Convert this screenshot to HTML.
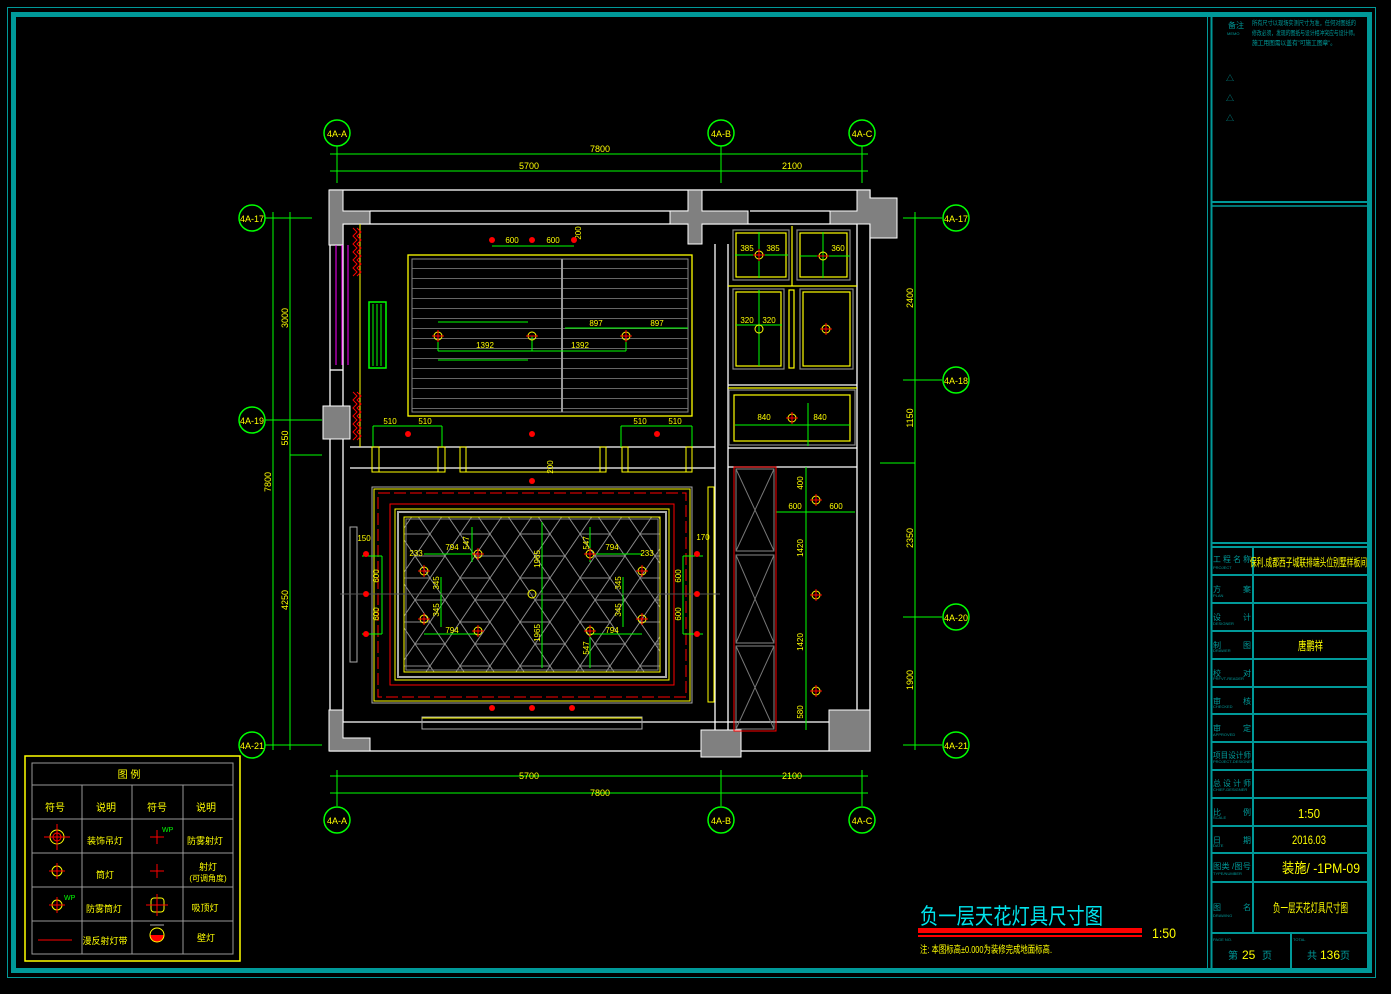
<!DOCTYPE html>
<html><head><meta charset="utf-8"><style>
html,body{margin:0;padding:0;background:#000;}
svg{display:block;}
text{font-family:"Liberation Sans","Noto Sans CJK SC",sans-serif;}
</style></head><body>
<svg width="1391" height="994" viewBox="0 0 1391 994" xmlns="http://www.w3.org/2000/svg">
<defs>
<pattern id="hex" x="400" y="512" width="60" height="44" patternUnits="userSpaceOnUse">
<path d="M0 22 L15 0 L45 0 L60 22 L45 44 L15 44 Z M15 0 L30 22 L15 44 M45 0 L30 22 L45 44 M0 22 L30 22" stroke="#8a8a8a" stroke-width="1" fill="none"/>
</pattern>
<pattern id="slat" x="0" y="258" width="10" height="10" patternUnits="userSpaceOnUse">
<line x1="0" y1="0.5" x2="10" y2="0.5" stroke="#666" stroke-width="1"/>
</pattern>
</defs>
<rect width="1391" height="994" fill="#000"/>
<!-- frame -->
<rect x="7.5" y="7.5" width="1368" height="970" fill="none" stroke="#009999" stroke-width="1"/>
<rect x="13.5" y="14.5" width="1356" height="956" fill="none" stroke="#009999" stroke-width="5"/>
<rect x="1368" y="14" width="4" height="958" fill="#009999"/>
<line x1="1207.5" y1="17" x2="1207.5" y2="970" stroke="#009999"/>
<line x1="1211.5" y1="17" x2="1211.5" y2="970" stroke="#009999" stroke-width="2"/>
<line x1="1211" y1="202" x2="1368" y2="202" stroke="#009999" stroke-width="2"/>
<line x1="1211" y1="206" x2="1368" y2="206" stroke="#009999" stroke-width="1.5"/>
<!-- notes -->
<text x="1228" y="28" font-size="8" fill="#009999">备注</text>
<text x="1227" y="35" font-size="4" fill="#009999">MEMO</text>
<text x="1252" y="25" font-size="6.5" fill="#009999" textLength="104" lengthAdjust="spacingAndGlyphs">所有尺寸以现场实测尺寸为准，任何对图纸的</text>
<text x="1252" y="35" font-size="6.5" fill="#009999" textLength="106" lengthAdjust="spacingAndGlyphs">修改必须，发现的图纸与设计相冲突应与设计师。</text>
<text x="1252" y="45" font-size="6.5" fill="#009999" textLength="84" lengthAdjust="spacingAndGlyphs">施工用图需以盖有"可施工图章"。</text>
<text x="1226" y="81" font-size="8" fill="#009999">△</text>
<text x="1226" y="101" font-size="8" fill="#009999">△</text>
<text x="1226" y="121" font-size="8" fill="#009999">△</text>
<!-- title block -->
<g stroke="#009999" stroke-width="2" fill="none">
<line x1="1211" y1="543" x2="1368" y2="543"/><line x1="1211" y1="547" x2="1368" y2="547"/>
<line x1="1211" y1="575" x2="1368" y2="575"/><line x1="1211" y1="603" x2="1368" y2="603"/>
<line x1="1211" y1="631" x2="1368" y2="631"/><line x1="1211" y1="659" x2="1368" y2="659"/>
<line x1="1211" y1="687" x2="1368" y2="687"/><line x1="1211" y1="714" x2="1368" y2="714"/>
<line x1="1211" y1="742" x2="1368" y2="742"/><line x1="1211" y1="770" x2="1368" y2="770"/>
<line x1="1211" y1="798" x2="1368" y2="798"/><line x1="1211" y1="826" x2="1368" y2="826"/>
<line x1="1211" y1="853" x2="1368" y2="853"/><line x1="1211" y1="882" x2="1368" y2="882"/>
<line x1="1211" y1="933" x2="1368" y2="933"/>
<line x1="1253" y1="547" x2="1253" y2="933"/><line x1="1291" y1="933" x2="1291" y2="970"/>
</g>
<g font-size="8" fill="#009999">
<text x="1213" y="562" textLength="38" lengthAdjust="spacingAndGlyphs">工 程 名 称</text><text x="1213" y="592" textLength="38">方 案</text>
<text x="1213" y="620" textLength="38">设 计</text><text x="1213" y="648" textLength="38">制 图</text>
<text x="1213" y="676" textLength="38">校 对</text><text x="1213" y="704" textLength="38">审 核</text>
<text x="1213" y="731" textLength="38">审 定</text><text x="1213" y="758" textLength="38" lengthAdjust="spacingAndGlyphs">项目设计师</text>
<text x="1213" y="786" textLength="38" lengthAdjust="spacingAndGlyphs">总 设 计 师</text><text x="1213" y="815" textLength="38">比 例</text>
<text x="1213" y="843" textLength="38">日 期</text><text x="1213" y="869" textLength="38" lengthAdjust="spacingAndGlyphs">图类 /图号</text>
<text x="1213" y="910" textLength="38">图 名</text>
</g>
<g font-size="4" fill="#009999">
<text x="1213" y="569">PROJECT</text><text x="1213" y="597">PLAN</text><text x="1213" y="625">DESIGNER</text>
<text x="1213" y="652">DRAWER</text><text x="1213" y="680">PRFVT-READER</text><text x="1213" y="708">CHECKED</text>
<text x="1213" y="736">APPROVED</text><text x="1213" y="763">PROJECT-DESIGNER</text><text x="1213" y="791">CHIEF-DESIGNER</text>
<text x="1213" y="819">SCALE</text><text x="1213" y="847">DATE</text><text x="1213" y="875">TYPE/NUMBER</text>
<text x="1213" y="917">DRAWING</text><text x="1213" y="941">PAGE NO.</text><text x="1293" y="941">TOTAL</text>
</g>
<g fill="#ffff00">
<text x="1250" y="566" font-size="11" textLength="117" lengthAdjust="spacingAndGlyphs">保利.成都西子城联排端头位别墅样板间</text>
<text x="1298" y="650" font-size="12" textLength="25" lengthAdjust="spacingAndGlyphs">唐鹏祥</text>
<text x="1298" y="818" font-size="13" textLength="22" lengthAdjust="spacingAndGlyphs">1:50</text>
<text x="1292" y="844" font-size="12" textLength="34" lengthAdjust="spacingAndGlyphs">2016.03</text>
<text x="1282" y="873" font-size="14" textLength="78" lengthAdjust="spacingAndGlyphs">装施/ -1PM-09</text>
<text x="1273" y="912" font-size="12" textLength="75" lengthAdjust="spacingAndGlyphs">负一层天花灯具尺寸图</text>
</g>
<text x="1228" y="959" font-size="10" fill="#009999">第</text><text x="1242" y="959" font-size="12" fill="#ffff00">25</text><text x="1262" y="959" font-size="10" fill="#009999">页</text>
<text x="1307" y="959" font-size="10" fill="#009999">共</text><text x="1320" y="959" font-size="12" fill="#ffff00">136</text><text x="1340" y="959" font-size="10" fill="#009999">页</text>
<!-- drawing title -->
<text x="920" y="924" font-size="22" fill="#00e5ee" textLength="183" lengthAdjust="spacingAndGlyphs">负一层天花灯具尺寸图</text>
<rect x="918" y="928" width="224" height="5" fill="#ff0000"/>
<rect x="918" y="935" width="224" height="2" fill="#ff0000"/>
<text x="1152" y="938" font-size="14" fill="#ffff00" textLength="24" lengthAdjust="spacingAndGlyphs">1:50</text>
<text x="920" y="953" font-size="10" fill="#ffff00" textLength="132" lengthAdjust="spacingAndGlyphs">注: 本图标高±0.000为装修完成地面标高.</text>

<!-- axes / grid bubbles -->
<g stroke="#00ff00" stroke-width="1" fill="none">
<line x1="337" y1="146" x2="337" y2="183"/><line x1="721" y1="146" x2="721" y2="183"/><line x1="862" y1="146" x2="862" y2="183"/>
<line x1="330" y1="154" x2="868" y2="154"/><line x1="330" y1="171" x2="868" y2="171"/>
<line x1="337" y1="770" x2="337" y2="806"/><line x1="721" y1="770" x2="721" y2="806"/><line x1="862" y1="770" x2="862" y2="806"/>
<line x1="330" y1="776" x2="868" y2="776"/><line x1="330" y1="793" x2="868" y2="793"/>
<line x1="265" y1="218" x2="312" y2="218"/><line x1="265" y1="420" x2="322" y2="420"/><line x1="265" y1="745" x2="322" y2="745"/>
<line x1="273" y1="212" x2="273" y2="750"/><line x1="290" y1="212" x2="290" y2="750"/>
<line x1="290" y1="455" x2="322" y2="455"/>
<line x1="903" y1="218" x2="942" y2="218"/><line x1="903" y1="380" x2="942" y2="380"/><line x1="903" y1="617" x2="942" y2="617"/><line x1="903" y1="745" x2="942" y2="745"/>
<line x1="915" y1="212" x2="915" y2="750"/><line x1="880" y1="463" x2="915" y2="463"/>
</g>
<g stroke="#00ff00" stroke-width="1.5" fill="none">
<circle cx="337" cy="133" r="13"/><circle cx="721" cy="133" r="13"/><circle cx="862" cy="133" r="13"/>
<circle cx="337" cy="820" r="13"/><circle cx="721" cy="820" r="13"/><circle cx="862" cy="820" r="13"/>
<circle cx="252" cy="218" r="13"/><circle cx="252" cy="420" r="13"/><circle cx="252" cy="745" r="13"/>
<circle cx="956" cy="218" r="13"/><circle cx="956" cy="380" r="13"/><circle cx="956" cy="617" r="13"/><circle cx="956" cy="745" r="13"/>
</g>
<g fill="#ffff00" font-size="9" text-anchor="middle">
<text x="337" y="137">4A-A</text><text x="721" y="137">4A-B</text><text x="862" y="137">4A-C</text>
<text x="337" y="824">4A-A</text><text x="721" y="824">4A-B</text><text x="862" y="824">4A-C</text>
<text x="252" y="222">4A-17</text><text x="252" y="424">4A-19</text><text x="252" y="749">4A-21</text>
<text x="956" y="222">4A-17</text><text x="956" y="384">4A-18</text><text x="956" y="621">4A-20</text><text x="956" y="749">4A-21</text>
<text x="600" y="152">7800</text><text x="529" y="169">5700</text><text x="792" y="169">2100</text>
<text x="529" y="779">5700</text><text x="792" y="779">2100</text><text x="600" y="796">7800</text>
<text transform="translate(288,318) rotate(-90)">3000</text>
<text transform="translate(288,438) rotate(-90)">550</text>
<text transform="translate(288,600) rotate(-90)">4250</text>
<text transform="translate(271,482) rotate(-90)">7800</text>
<text transform="translate(913,298) rotate(-90)">2400</text>
<text transform="translate(913,418) rotate(-90)">1150</text>
<text transform="translate(913,538) rotate(-90)">2350</text>
<text transform="translate(913,680) rotate(-90)">1900</text>
</g>

<!-- walls -->
<g stroke="#fff" stroke-width="1.3" fill="none">
<rect x="330" y="190" width="540" height="561"/>
<line x1="343" y1="224" x2="857" y2="224"/><line x1="370" y1="211" x2="688" y2="211"/><line x1="750" y1="211" x2="830" y2="211"/>
<line x1="343" y1="224" x2="343" y2="722"/><line x1="857" y1="224" x2="857" y2="722"/>
<line x1="343" y1="722" x2="857" y2="722"/>
<line x1="715" y1="244" x2="715" y2="730"/><line x1="728" y1="244" x2="728" y2="730"/>
<line x1="350" y1="447" x2="715" y2="447"/><line x1="350" y1="468" x2="715" y2="468"/>
<line x1="728" y1="385" x2="857" y2="385"/><line x1="728" y1="448" x2="857" y2="448"/>
<line x1="728" y1="467" x2="857" y2="467"/>
<line x1="330" y1="245" x2="343" y2="245"/><line x1="330" y1="370" x2="343" y2="370"/>
</g>
<g fill="#808080" stroke="#fff" stroke-width="1">
<path d="M329 190 H343 V211 H370 V224 H343 V245 H329 Z"/>
<path d="M688 190 H702 V211 H748 V224 H702 V244 H688 V224 H670 V211 H688 Z"/>
<path d="M857 190 H870 V198 H897 V238 H870 V224 H830 V211 H857 Z"/>
<rect x="323" y="406" width="27" height="33"/>
<path d="M329 710 H343 V738 H370 V751 H329 Z"/>
<rect x="701" y="730" width="40" height="27"/>
<rect x="829" y="710" width="41" height="41"/>
</g>
<!-- left wall details -->
<g stroke="#ff00ff" stroke-width="1"><line x1="336" y1="245" x2="336" y2="365"/><line x1="342" y1="245" x2="342" y2="365"/><line x1="348" y1="245" x2="348" y2="365"/></g>
<line x1="360" y1="224" x2="360" y2="447" stroke="#ffff00"/>
<path d="M353 228 l4 4 -4 4 4 4 -4 4 4 4 -4 4 4 4 -4 4 4 4 -4 4 4 4 -4 4 M357 228 l4 4 -4 4 4 4 -4 4 4 4 -4 4 4 4 -4 4 4 4 -4 4 4 4 -4 4" stroke="#ff0000" fill="none"/>
<path d="M353 392 l4 4 -4 4 4 4 -4 4 4 4 -4 4 4 4 -4 4 4 4 -4 4 4 4 -4 4 M357 392 l4 4 -4 4 4 4 -4 4 4 4 -4 4 4 4 -4 4 4 4 -4 4 4 4 -4 4" stroke="#ff0000" fill="none"/>
<rect x="369" y="302" width="17" height="66" fill="none" stroke="#00ff00" stroke-width="1.5"/>
<g stroke="#00ff00"><line x1="373" y1="304" x2="373" y2="366"/><line x1="377" y1="304" x2="377" y2="366"/><line x1="381" y1="304" x2="381" y2="366"/></g>
<!-- upper ceiling panel -->
<rect x="408" y="255" width="284" height="161" fill="none" stroke="#ffff00" stroke-width="1.3"/>
<rect x="412" y="259" width="276" height="153" fill="url(#slat)" stroke="#888"/>
<line x1="562" y1="259" x2="562" y2="412" stroke="#999" stroke-width="2"/>
<g stroke="#00ff00" stroke-width="1" fill="none">
<line x1="438" y1="322" x2="528" y2="322"/><line x1="438" y1="360" x2="528" y2="360"/>
<line x1="438" y1="351" x2="626" y2="351"/><line x1="565" y1="328" x2="688" y2="328"/>
<line x1="492" y1="246" x2="574" y2="246"/><line x1="532" y1="336" x2="532" y2="351"/><line x1="626" y1="336" x2="626" y2="351"/>
<line x1="438" y1="336" x2="438" y2="351"/>
</g>
<g fill="#ffff00" font-size="8" text-anchor="middle">
<text x="512" y="243">600</text><text x="553" y="243">600</text><text transform="translate(581,233) rotate(-90)">200</text>
<text x="485" y="348">1392</text><text x="580" y="348">1392</text><text x="596" y="326">897</text><text x="657" y="326">897</text>
</g>
<!-- upper right cabinets -->
<g fill="none" stroke-width="1.2">
<rect x="733" y="230" width="56" height="50" stroke="#888"/><rect x="736" y="233" width="50" height="44" stroke="#ffff00"/>
<rect x="797" y="230" width="53" height="50" stroke="#888"/><rect x="800" y="233" width="47" height="44" stroke="#ffff00"/>
<rect x="733" y="289" width="51" height="80" stroke="#888"/><rect x="736" y="292" width="45" height="74" stroke="#ffff00"/>
<rect x="800" y="289" width="53" height="80" stroke="#888"/><rect x="803" y="292" width="47" height="74" stroke="#ffff00"/>
<rect x="789" y="290" width="5" height="78" stroke="#ffff00"/>
<rect x="729" y="390" width="126" height="55" stroke="#888"/><rect x="734" y="395" width="116" height="46" stroke="#ffff00"/>
<line x1="728" y1="286" x2="857" y2="286" stroke="#ffff00"/><line x1="728" y1="388" x2="857" y2="388" stroke="#ffff00"/>
<line x1="792" y1="226" x2="792" y2="286" stroke="#ffff00"/>
</g>
<g stroke="#00ff00" fill="none">
<line x1="759" y1="232" x2="759" y2="278"/><line x1="735" y1="255" x2="788" y2="255"/>
<line x1="823" y1="232" x2="823" y2="278"/><line x1="800" y1="256" x2="850" y2="256"/>
<line x1="759" y1="290" x2="759" y2="366"/><line x1="736" y1="325" x2="782" y2="325"/>
<line x1="808" y1="403" x2="808" y2="446"/><line x1="735" y1="425" x2="850" y2="425"/>
</g>
<g fill="#ffff00" font-size="8" text-anchor="middle">
<text x="747" y="251">385</text><text x="773" y="251">385</text><text x="838" y="251">360</text>
<text x="747" y="323">320</text><text x="769" y="323">320</text><text x="764" y="420">840</text><text x="820" y="420">840</text>
</g>
<!-- middle row 510 dims & posts -->
<g stroke="#00ff00" fill="none">
<line x1="373" y1="426" x2="442" y2="426"/><line x1="373" y1="426" x2="373" y2="447"/><line x1="442" y1="426" x2="442" y2="447"/>
<line x1="621" y1="426" x2="692" y2="426"/><line x1="621" y1="426" x2="621" y2="447"/><line x1="692" y1="426" x2="692" y2="447"/>
</g>
<g fill="#ffff00" font-size="8" text-anchor="middle">
<text x="390" y="424">510</text><text x="425" y="424">510</text><text x="640" y="424">510</text><text x="675" y="424">510</text>
</g>
<g fill="none" stroke="#ffff00">
<rect x="372" y="447" width="7" height="25"/><rect x="438" y="447" width="7" height="25"/><rect x="460" y="447" width="6" height="25"/>
<rect x="600" y="447" width="6" height="25"/><rect x="622" y="447" width="6" height="25"/><rect x="686" y="447" width="6" height="25"/>
<line x1="372" y1="472" x2="445" y2="472"/><line x1="460" y1="472" x2="606" y2="472"/><line x1="622" y1="472" x2="692" y2="472"/>
</g>
<!-- lower ceiling -->
<rect x="372" y="487" width="320" height="216" fill="none" stroke="#aaa"/>
<rect x="374" y="489" width="316" height="212" fill="none" stroke="#ffff00"/>
<rect x="378" y="493" width="308" height="204" fill="none" stroke="#ff0000" stroke-dasharray="12 4"/>
<rect x="390" y="504" width="284" height="181" fill="none" stroke="#ff0000"/>
<rect x="395" y="509" width="274" height="171" fill="none" stroke="#ffff00"/>
<rect x="398" y="512" width="268" height="165" fill="none" stroke="#aaa" stroke-width="2"/>
<rect x="404" y="517" width="256" height="155" fill="url(#hex)" stroke="#ffff00"/>
<rect x="406" y="519" width="252" height="151" fill="none" stroke="#888"/>
<rect x="350" y="527" width="7" height="135" fill="none" stroke="#aaa"/>
<rect x="708" y="487" width="6" height="215" fill="none" stroke="#ffff00"/>
<rect x="422" y="717" width="220" height="12" fill="none" stroke="#aaa"/>
<line x1="422" y1="718" x2="642" y2="718" stroke="#ffff00"/>
<g stroke="#00ff00" fill="none">
<line x1="542" y1="522" x2="542" y2="668"/>
<line x1="424" y1="554" x2="478" y2="554"/><line x1="590" y1="554" x2="642" y2="554"/>
<line x1="424" y1="634" x2="478" y2="634"/><line x1="590" y1="634" x2="642" y2="634"/>
<line x1="472" y1="527" x2="472" y2="562"/><line x1="590" y1="527" x2="590" y2="562"/><line x1="590" y1="634" x2="590" y2="668"/>
<line x1="441" y1="577" x2="441" y2="627"/><line x1="623" y1="577" x2="623" y2="627"/>
<line x1="362" y1="556" x2="382" y2="556"/><line x1="382" y1="556" x2="382" y2="634"/><line x1="362" y1="634" x2="382" y2="634"/>
<line x1="683" y1="556" x2="683" y2="634"/><line x1="683" y1="556" x2="703" y2="556"/><line x1="683" y1="634" x2="703" y2="634"/>
<line x1="340" y1="594" x2="720" y2="594" stroke="#555"/>
<line x1="806" y1="467" x2="806" y2="730"/><line x1="776" y1="512" x2="855" y2="512"/>
</g>
<g fill="#ffff00" font-size="8" text-anchor="middle">
<text x="416" y="556">233</text><text x="452" y="550">794</text><text x="612" y="550">794</text><text x="647" y="556">233</text>
<text x="452" y="633">794</text><text x="612" y="633">794</text><text x="364" y="541">150</text><text x="703" y="540">170</text>
<text transform="translate(540,559) rotate(-90)">1965</text><text transform="translate(540,633) rotate(-90)">1965</text>
<text transform="translate(469,543) rotate(-90)">547</text><text transform="translate(589,543) rotate(-90)">547</text><text transform="translate(589,648) rotate(-90)">547</text>
<text transform="translate(439,583) rotate(-90)">345</text><text transform="translate(439,610) rotate(-90)">345</text>
<text transform="translate(621,583) rotate(-90)">345</text><text transform="translate(621,610) rotate(-90)">345</text>
<text transform="translate(379,576) rotate(-90)">600</text><text transform="translate(379,614) rotate(-90)">600</text>
<text transform="translate(681,576) rotate(-90)">600</text><text transform="translate(681,614) rotate(-90)">600</text>
<text x="795" y="509">600</text><text x="836" y="509">600</text>
<text transform="translate(803,483) rotate(-90)">400</text><text transform="translate(803,548) rotate(-90)">1420</text>
<text transform="translate(803,642) rotate(-90)">1420</text><text transform="translate(803,712) rotate(-90)">580</text>
<text transform="translate(553,467) rotate(-90)">200</text>
</g>
<!-- right cabinet column -->
<g fill="none">
<rect x="734" y="467" width="42" height="264" stroke="#ff0000"/>
<rect x="736" y="469" width="38" height="82" stroke="#888"/><rect x="736" y="555" width="38" height="88" stroke="#888"/><rect x="736" y="646" width="38" height="83" stroke="#888"/>
<path d="M736 469 L774 551 M774 469 L736 551 M736 555 L774 643 M774 555 L736 643 M736 646 L774 729 M774 646 L736 729" stroke="#777"/>
</g>
<!-- lights -->
<g stroke="#ff0000" stroke-width="1" fill="none">
<g stroke="#ffff00"><circle cx="438" cy="336" r="4"/><circle cx="532" cy="336" r="4"/><circle cx="626" cy="336" r="4"/>
<circle cx="759" cy="255" r="4"/><circle cx="823" cy="256" r="4"/><circle cx="759" cy="329" r="4"/><circle cx="826" cy="329" r="4"/><circle cx="792" cy="418" r="4"/>
<circle cx="424" cy="571" r="4"/><circle cx="478" cy="554" r="4"/><circle cx="590" cy="554" r="4"/><circle cx="642" cy="571" r="4"/>
<circle cx="424" cy="619" r="4"/><circle cx="478" cy="631" r="4"/><circle cx="590" cy="631" r="4"/><circle cx="642" cy="619" r="4"/>
<circle cx="532" cy="594" r="4"/><circle cx="816" cy="500" r="4"/><circle cx="816" cy="595" r="4"/><circle cx="816" cy="691" r="4"/></g>
<path d="M432 336h12M438 330v12M526 336h12M620 336h12M626 330v12M753 255h12M759 249v12M817 256h12M820 329h12M826 323v12M786 418h12M792 412v12M418 571h12M424 565v12M472 554h12M478 548v12M584 554h12M590 548v12M636 571h12M642 565v12M418 619h12M424 613v12M472 631h12M478 625v12M584 631h12M590 625v12M636 619h12M642 613v12M810 500h12M816 494v12M810 595h12M816 589v12M810 691h12M816 685v12"/>
</g>
<g fill="#ff0000">
<circle cx="492" cy="240" r="3"/><circle cx="532" cy="240" r="3"/><circle cx="574" cy="240" r="3"/>
<circle cx="408" cy="434" r="3"/><circle cx="532" cy="434" r="3"/><circle cx="657" cy="434" r="3"/><circle cx="532" cy="481" r="3"/>
<circle cx="366" cy="554" r="3"/><circle cx="366" cy="594" r="3"/><circle cx="366" cy="634" r="3"/>
<circle cx="697" cy="554" r="3"/><circle cx="697" cy="594" r="3"/><circle cx="697" cy="634" r="3"/>
<circle cx="492" cy="708" r="3"/><circle cx="532" cy="708" r="3"/><circle cx="572" cy="708" r="3"/>
</g>
<!-- legend -->
<rect x="25" y="756" width="215" height="205" fill="none" stroke="#ffff00" stroke-width="1.5"/>
<g stroke="#999" fill="none">
<rect x="32" y="763" width="201" height="191"/>
<line x1="32" y1="785" x2="233" y2="785"/><line x1="32" y1="819" x2="233" y2="819"/><line x1="32" y1="853" x2="233" y2="853"/>
<line x1="32" y1="887" x2="233" y2="887"/><line x1="32" y1="921" x2="233" y2="921"/>
<line x1="82" y1="785" x2="82" y2="954"/><line x1="132" y1="785" x2="132" y2="954"/><line x1="183" y1="785" x2="183" y2="954"/>
</g>
<g fill="#ffff00" font-size="10" text-anchor="middle">
<text x="129" y="778">图 例</text>
<text x="55" y="811">符号</text><text x="106" y="811">说明</text><text x="157" y="811">符号</text><text x="206" y="811">说明</text>
<text x="105" y="844" font-size="9">装饰吊灯</text><text x="205" y="844" font-size="9">防雾射灯</text>
<text x="105" y="878" font-size="9">筒灯</text><text x="208" y="870" font-size="9">射灯</text><text x="208" y="881" font-size="8">(可调角度)</text>
<text x="104" y="912" font-size="9">防雾筒灯</text><text x="205" y="911" font-size="9">吸顶灯</text>
<text x="105" y="944" font-size="9">漫反射灯带</text><text x="206" y="941" font-size="9">壁灯</text>
</g>
<g fill="none" stroke="#ffff00">
<circle cx="57" cy="837" r="7"/><circle cx="57" cy="837" r="4" stroke="#ff0000"/><circle cx="57" cy="871" r="5"/><circle cx="57" cy="905" r="5"/>
<rect x="151" y="898" width="13" height="14" rx="3"/>
</g>
<g stroke="#ff0000"><path d="M44 837h26M57 824v26M49 871h16M57 863v16M49 905h16M57 897v16M150 837h14M157 830v14M150 871h14M157 864v14M146 905h22M157 894v22M38 940h34"/></g>
<path d="M150 935 a7 7 0 0 0 14 0 Z" fill="#ff0000"/><circle cx="157" cy="935" r="7" fill="none" stroke="#ffff00"/><line x1="150" y1="925" x2="164" y2="925" stroke="#aaa"/>
<text x="162" y="832" font-size="7" fill="#00ff00">WP</text><text x="64" y="900" font-size="7" fill="#00ff00">WP</text>
</svg>
</body></html>
